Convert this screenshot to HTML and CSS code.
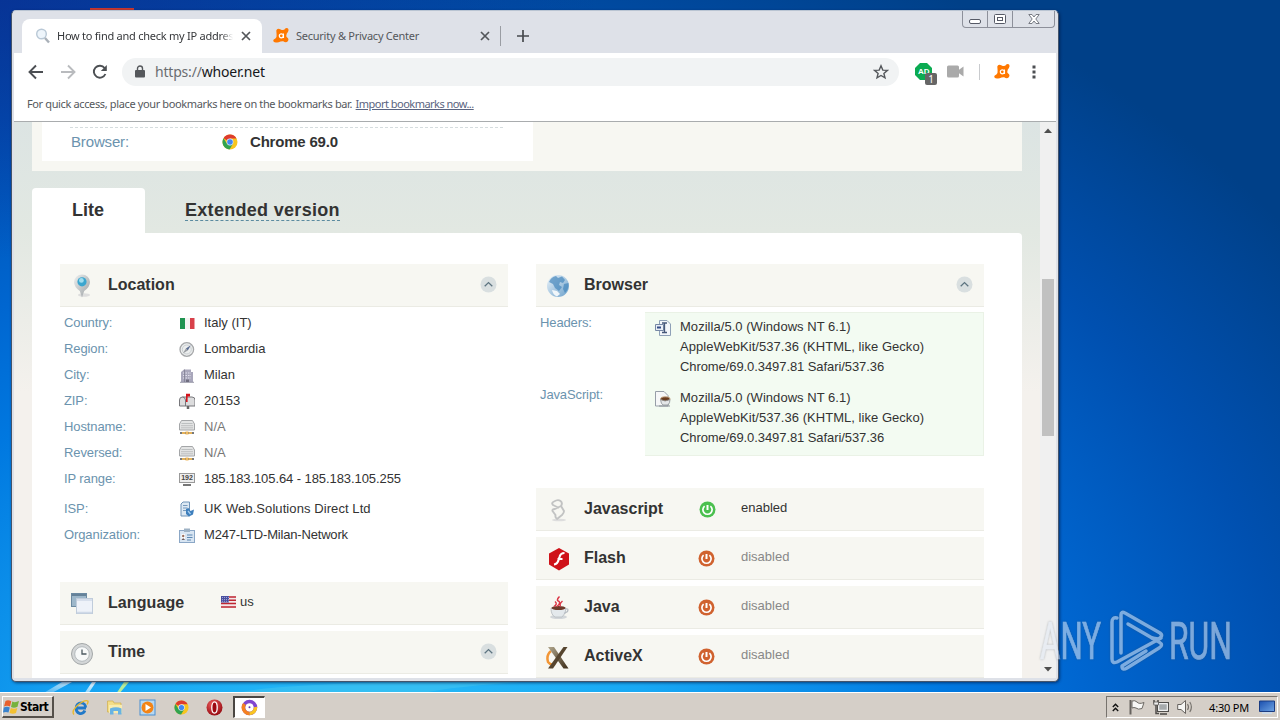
FILE: index.html
```html
<!DOCTYPE html>
<html lang="en">
  <head>
    <meta charset="UTF-8" />
    <meta name="viewport" content="width=device-width, initial-scale=1.0" />
    <title>Whoer</title>
    <link rel="stylesheet" href="styles.css">
  </head>
  <body>
    <!-- shared icons -->
    <svg width="0" height="0" class="defs">
      <defs>
        <linearGradient id="streak" x1="0" y1="1" x2="1" y2="0">
          <stop offset="0" stop-color="#fff" stop-opacity="0.2" />
          <stop offset="1" stop-color="#fff" stop-opacity="0.9" />
        </linearGradient>
        <linearGradient id="pin" x1="0" y1="0" x2="1" y2="1">
          <stop offset="0" stop-color="#eef0f0" />
          <stop offset="1" stop-color="#9a9fa2" />
        </linearGradient>
        <linearGradient id="globe" x1="0" y1="0" x2="1" y2="1">
          <stop offset="0" stop-color="#eef5fa" />
          <stop offset="1" stop-color="#6aa0cb" />
        </linearGradient>
        <linearGradient id="wood" x1="0" y1="0" x2="1" y2="1">
          <stop offset="0" stop-color="#b0a68c" />
          <stop offset="1" stop-color="#3c2c18" />
        </linearGradient>
        <linearGradient id="screen" x1="0" y1="0" x2="1" y2="1">
          <stop offset="0" stop-color="#1a4fae" />
          <stop offset="1" stop-color="#6ea4e4" />
        </linearGradient>
        <radialGradient id="red" cx="0.4" cy="0.3" r="0.8">
          <stop offset="0" stop-color="#f06060" />
          <stop offset="1" stop-color="#8c0008" />
        </radialGradient>
      </defs>
      <symbol id="i-chrome" viewBox="0 0 16 16">
        <circle cx="8" cy="8" r="7.5" fill="#f7c51e" />
        <path d="M8 8 L1.5 4.2 A7.5 7.5 0 0 1 14.5 4.4 L8 4.4 Z" fill="#dd3b2e" />
        <path d="M1.5 4.2 A7.5 7.5 0 0 0 7.5 15.5 L11 9.8 L5 9.8 Z" fill="#31a350" />
        <circle cx="8" cy="8" r="3.4" fill="#e8eefb" />
        <circle cx="8" cy="8" r="2.8" fill="#4287f0" />
      </symbol>
      <symbol id="i-avast" viewBox="0 0 18 18">
        <path d="M4.3 3.6 Q5 1 7.5 2 L9.8 3 Q12 3.4 13.6 1.2 Q16.3 .2 16.6 2.9 Q16.2 5 14.8 6.4 Q14 8.6 14.6 10 Q17.6 12 15.8 14.2 Q14 16.4 11.2 14.2 Q9 14 6.6 15.2 Q1.4 16.4 1.2 13.8 Q1.2 12.4 3.4 11.6 Q5 9.6 4.6 7.4 Z" fill="#ff7800" />
        <circle cx="9.3" cy="8.8" r="2" fill="none" stroke="#fff" stroke-width="1.2" />
        <path d="M11.5 6.5 V11" stroke="#fff" stroke-width="1.1" />
      </symbol>
      <symbol id="i-close" viewBox="0 0 10 10">
        <path d="M1 1 L9 9 M9 1 L1 9" stroke="#53565a" stroke-width="1.7" />
      </symbol>
      <symbol id="i-up" viewBox="0 0 17 17">
        <circle cx="8.5" cy="8.5" r="8" fill="#d9dfe0" />
        <path d="M4.7 10.3 L8.5 6.6 L12.3 10.3" fill="none" stroke="#5d7480" stroke-width="1.3" />
      </symbol>
      <symbol id="i-power" viewBox="0 0 17 17">
        <circle cx="8.5" cy="8.5" r="8" fill="currentColor" />
        <path d="M5.6 5.1 A4.6 4.6 0 1 0 11.4 5.1" fill="none" stroke="#fff" stroke-width="1.7" />
        <path d="M8.5 4 V9" stroke="#fff" stroke-width="2" />
      </symbol>
      <symbol id="i-host" viewBox="0 0 16 16">
        <path d="M2.5 1.5 H13.5 L15.5 5 V11 H.5 V5 Z" fill="#e3e4e4" stroke="#a4a6a8" />
        <path d="M2.5 4.5 H13.5 M2 6.7 H14 M2 8.8 H14" stroke="#b4b6b7" stroke-width=".8" />
        <path d="M1 14 H15" stroke="#77797b" stroke-width="2" />
        <path d="M3 14 H6 M10 14 H13" stroke="#e5b25a" stroke-width="2" />
        <path d="M6.5 12.5 H9.5 V15.5 H6.5 Z" fill="#f1bb60" />
      </symbol>
    </svg>

    <div class="desktop">
      <svg class="streaks" width="1280" height="12" viewBox="0 0 1280 12">
        <path d="M42 12 L62 0 H72 L50 12 Z M84 12 L92 0 H96 L88 12 Z" fill="url(#streak)" />
        <path d="M116 12 L124 0 H129 L119 12 Z" fill="#b9ec9a" />
        <path d="M235 12 Q260 3 400 0 H520 Q440 6 420 12 Z" fill="#7fe0e8" opacity=".2" />
      </svg>
      <div class="shortcut"></div>

      <div class="window">
        <div class="window-buttons">
          <span><svg width="12" height="6"><rect x=".5" y=".5" width="11" height="4" rx="1.5" fill="#fff" stroke="#565a66" /></svg></span>
          <span><svg width="12" height="10"><rect x=".5" y=".5" width="11" height="9" rx="1" fill="#fff" stroke="#565a66" /><rect x="3.5" y="3.5" width="5" height="3" fill="#fff" stroke="#565a66" /></svg></span>
          <span><svg width="12" height="10"><path d="M.8 .5 H4 L6 3 L8 .5 H11.2 L7.8 5 L11.2 9.5 H8 L6 7 L4 9.5 H.8 L4.2 5 Z" fill="#fff" stroke="#6b6e78" stroke-width=".9" /></svg></span>
        </div>

        <div class="tab-strip">
          <div class="tab active">
            <svg width="16" height="16"><circle cx="6.5" cy="6" r="4.8" fill="#eef5fb" stroke="#b9c8d6" stroke-width="1.4" /><path d="M10 10 L14 14.5" stroke="#a9b0b8" stroke-width="2.4" /></svg>
            <span class="tab-title">How to find and check my IP address</span>
            <svg class="tab-close" width="10" height="10"><use href="#i-close" /></svg>
          </div>
          <div class="tab">
            <svg width="18" height="18"><use href="#i-avast" /></svg>
            <span class="tab-title">Security &amp; Privacy Center</span>
            <svg class="tab-close" width="10" height="10"><use href="#i-close" /></svg>
          </div>
          <svg class="new-tab" width="12" height="12"><path d="M6 0 V12 M0 6 H12" stroke="#47494d" stroke-width="1.7" /></svg>
        </div>

        <div class="toolbar">
          <svg class="nav-icon" width="16" height="16"><path d="M15 8 H2 M8 1.5 L1.5 8 L8 14.5" fill="none" stroke="#4c4f53" stroke-width="1.9" /></svg>
          <svg class="nav-icon" width="16" height="16"><path d="M1 8 H14 M8 1.5 L14.5 8 L8 14.5" fill="none" stroke="#b9bbbe" stroke-width="1.9" /></svg>
          <svg class="nav-icon" width="16" height="16"><path d="M13.4 10 A6 6 0 1 1 12.6 4" fill="none" stroke="#4c4f53" stroke-width="1.9" /><path d="M14.8 1 V7 H8.8 Z" fill="#4c4f53" /></svg>
          <div class="omnibox">
            <svg width="10" height="13"><rect x="0" y="5" width="10" height="7.5" rx="1" fill="#55585c" /><path d="M2.5 5.5 V3.5 A2.5 2.5 0 0 1 7.5 3.5 V5.5" fill="none" stroke="#55585c" stroke-width="1.4" /></svg>
            <span class="url"><span>https://</span>whoer.net</span>
            <svg width="16" height="16"><path d="M8 1.8 L9.8 6.1 L14.4 6.4 L10.9 9.4 L12 13.9 L8 11.5 L4 13.9 L5.1 9.4 L1.6 6.4 L6.2 6.1 Z" fill="none" stroke="#55585c" stroke-width="1.4" /></svg>
          </div>
          <div class="extension adblock">
            <svg width="17" height="17"><path d="M5 0 H12 L17 5 V12 L12 17 H5 L0 12 V5 Z" fill="#0bab52" /></svg>
            <b>AD</b>
            <i>1</i>
          </div>
          <svg class="camera" width="17" height="13"><rect x="0" y=".5" width="12" height="12" rx="1.5" fill="#aaa" /><path d="M11 5.5 L16.5 1.5 V11.5 L11 7.5 Z" fill="#aaa" /></svg>
          <div class="divider"></div>
          <svg class="avast" width="18" height="18"><use href="#i-avast" /></svg>
          <svg width="4" height="14"><path d="M.5 .5 h3 v3 h-3z M.5 5.5 h3 v3 h-3z M.5 10.5 h3 v3 h-3z" fill="#4c4f53" /></svg>
        </div>

        <div class="bookmarks">
          <span>For quick access, place your bookmarks here on the bookmarks bar.</span>
          <a>Import bookmarks now...</a>
        </div>

        <div class="view">
          <div class="page">
            <div class="summary">
              <div class="summary-box">
                <span class="label">Browser:</span>
                <svg width="16" height="16"><use href="#i-chrome" /></svg>
                <b>Chrome 69.0</b>
              </div>
            </div>

            <div class="versions">
              <div class="version current">Lite</div>
              <div class="version"><span>Extended version</span></div>
            </div>

            <div class="panel">
              <div class="column">
                <div class="head">
                  <svg width="24" height="24"><ellipse cx="14" cy="21" rx="6" ry="1.8" fill="#ddd" /><path d="M12 23.5 L9.8 17 Q4 13 4 8 A8 7.6 0 0 1 20 8 Q20 13 14.2 17 Z" fill="url(#pin)" /><circle cx="12" cy="7.8" r="4.6" fill="#3aa6cf" /><circle cx="11.4" cy="6.4" r="2.4" fill="#a0dcee" /></svg>
                  <h2>Location</h2>
                  <svg class="up" width="17" height="17"><use href="#i-up" /></svg>
                </div>
                <div class="rows">
                  <div class="row">
                    <span class="label">Country:</span>
                    <svg width="16" height="16"><path d="M1 3 H6 V14 H1 Z" fill="#1f9350" /><path d="M6 3 H11 V14 H6 Z" fill="#f4f4f2" /><path d="M11 3 H15.5 V14 H11 Z" fill="#d8414a" /></svg>
                    <span>Italy (IT)</span>
                  </div>
                  <div class="row">
                    <span class="label">Region:</span>
                    <svg width="16" height="16"><circle cx="7.8" cy="8.5" r="6.8" fill="#eceeee" stroke="#a5a7a9" stroke-width="1.3" /><circle cx="7.8" cy="8.5" r="4.5" fill="none" stroke="#c9ced1" /><path d="M11.8 4.3 L8.8 9.4 L6.9 7.6 Z" fill="#5c6d92" /><path d="M3.8 12.6 L8.8 9.4 L6.9 7.6 Z" fill="#9a9ea3" /></svg>
                    <span>Lombardia</span>
                  </div>
                  <div class="row">
                    <span class="label">City:</span>
                    <svg width="16" height="16"><path d="M2 15 V5 L5 2.5 H12 V5 H14 V15 Z" fill="#a9a7bb" /><path d="M4 6 H12 M4 8.5 H12 M4 11 H12" stroke="#e2e1ee" stroke-dasharray="1.5 1" /><path d="M5.5 2.5 V15 M1 15.3 H15" stroke="#7f7d90" stroke-width=".8" /><path d="M7 12.5 H10 V15 H7 Z" fill="#706e80" /></svg>
                    <span>Milan</span>
                  </div>
                  <div class="row">
                    <span class="label">ZIP:</span>
                    <svg width="17" height="16"><path d="M.5 13 V7 Q.5 4 3.5 4 H13 Q16 4 16 7 V13 Z" fill="#dcdcdd" stroke="#77777b" /><path d="M6.5 13 V7 Q6 4 3.5 4" fill="none" stroke="#77777b" /><path d="M7 9 V.8 H11 V3.6 H8.6 V9 Z" fill="#d3131c" /><path d="M9 13 V16" stroke="#666" stroke-width="2.5" /></svg>
                    <span>20153</span>
                  </div>
                  <div class="row">
                    <span class="label">Hostname:</span>
                    <svg width="16" height="16"><use href="#i-host" /></svg>
                    <span class="muted">N/A</span>
                  </div>
                  <div class="row">
                    <span class="label">Reversed:</span>
                    <svg width="16" height="16"><use href="#i-host" /></svg>
                    <span class="muted">N/A</span>
                  </div>
                  <div class="row">
                    <span class="label">IP range:</span>
                    <span class="ip-icon"><i>192</i></span>
                    <span class="tight">185.183.105.64 - 185.183.105.255</span>
                  </div>
                  <div class="row isp">
                    <span class="label">ISP:</span>
                    <svg width="16" height="16"><path d="M2 15 V3 L4 1 H10.5 V15 Z" fill="#dce8f3" stroke="#6e93b8" /><path d="M4 4.5 H8.5 M4 7 H8.5 M4 9.5 H7" stroke="#7699bc" /><path d="M7 8 L9.5 7 L11.5 10 L15 8.5 L14 13.5 L10 15.5 L7 13 Z" fill="#3e7fbd" /><path d="M9 10 L11.5 13" stroke="#a4cdf0" stroke-width="1.3" /></svg>
                    <span class="provider">UK Web.Solutions Direct Ltd</span>
                  </div>
                  <div class="row">
                    <span class="label">Organization:</span>
                    <svg width="16" height="16"><rect x=".5" y="3.5" width="15" height="12" fill="#d8e5f2" stroke="#8ba7c6" /><path d="M5 1.5 H11 V5 H5 Z" fill="#9eb2c5" /><path d="M2.5 7 H6 V13 H2.5 Z" fill="#fff" /><circle cx="4.2" cy="9" r="1.2" fill="#9a6e5c" /><path d="M2.5 13 Q4.2 9.5 6 13 Z" fill="#6d5e62" /><path d="M8 8 H13.5 M8 10.5 H13.5 M8 13 H12" stroke="#5e89b3" /></svg>
                    <span class="organization">M247-LTD-Milan-Network</span>
                  </div>
                </div>
                <div class="head">
                  <svg width="24" height="24"><rect x="1.5" y="1.5" width="15" height="13" fill="#9db7ca" stroke="#6c8aa2" /><path d="M2 3 H16" stroke="#557189" stroke-width="1.5" /><rect x="6.5" y="6.5" width="16" height="15" fill="#eef2f9" stroke="#c0ccdb" /><path d="M7 8 H22 M7 20.5 H22" stroke="#cfd9e8" stroke-width="1.5" /></svg>
                  <h2 class="language">Language</h2>
                  <svg width="15" height="12"><path d="M0 0 H15 V12 H0 Z" fill="#f3e8ea" /><path d="M0 1 H15 M0 4.3 H15 M0 7.6 H15 M0 11 H15" stroke="#be2632" stroke-width="1.5" /><path d="M0 0 H8 V6.5 H0 Z" fill="#4a4fa0" /><path d="M1 1.5 H8 M1 3.5 H8 M1 5.3 H8" stroke="#c5c7e6" stroke-width=".7" stroke-dasharray="1 1" /></svg>
                  <span class="us">us</span>
                </div>
                <div class="head">
                  <svg width="24" height="24"><circle cx="12" cy="13" r="10.5" fill="#d3d6d7" stroke="#a3a7a8" /><circle cx="12" cy="13" r="7.3" fill="#f7f9f9" stroke="#b4babd" /><path d="M12 8.5 V13 H16.5" fill="none" stroke="#4d5a62" stroke-width="1.3" /></svg>
                  <h2>Time</h2>
                  <svg class="up" width="17" height="17"><use href="#i-up" /></svg>
                </div>
              </div>

              <div class="column">
                <div class="head">
                  <svg width="24" height="24"><circle cx="12" cy="12" r="11" fill="url(#globe)" /><path d="M3 8 Q5 3 10 2 L12 4 L16 2.5 L19 6 L17 9 L14 8 L13 11 L16 13 L13 17 L9 14 L7 10 Z M18 10 L22.5 9 Q23 15 19 19 L17 15 Z" fill="#4688bc" opacity=".7" /><path d="M6 16 L11 17 L14 20 L11 22.5 Q7 21 6 16 Z" fill="#fff" opacity=".85" /></svg>
                  <h2>Browser</h2>
                  <svg class="up" width="17" height="17"><use href="#i-up" /></svg>
                </div>
                <div class="agents">
                  <div class="agent-labels">
                    <span class="label">Headers:</span>
                    <span class="label">JavaScript:</span>
                  </div>
                  <div class="agent-box">
                    <div class="agent">
                      <svg width="16" height="16"><path d="M4.5 .5 H12 L15.5 4 V15.5 H4.5 Z" fill="#f3f6fa" stroke="#8ea0b7" /><path d="M.5 4.5 H8.5 V10.5 H.5 Z" fill="#e9eef6" stroke="#7688a5" /><path d="M2 7.5 H6" stroke="#354d86" stroke-width="2" /><path d="M7 3 H12 M9.5 3 V12.5 M7 12.5 H12" stroke="#46587a" stroke-width="1.3" /></svg>
                      <p>Mozilla/5.0 (Windows NT 6.1)<br />AppleWebKit/537.36 (KHTML, like Gecko)<br /><span>Chrome/69.0.3497.81 Safari/537.36</span></p>
                    </div>
                    <div class="agent">
                      <svg width="16" height="16"><path d="M.5 .5 H9 L13 4.5 V15 H.5 Z" fill="#f6f7f8" stroke="#979ea8" /><ellipse cx="10.3" cy="8" rx="4.7" ry="2.2" fill="#6a3d20" stroke="#c7a785" /><path d="M5.5 8.5 Q6 13 8 14 H13 Q15 12 15 8.5 Q10 11.5 5.5 8.5 Z" fill="#e4e6e8" stroke="#888d92" stroke-width=".8" /><path d="M4 15 H15" stroke="#8d9299" /></svg>
                      <p>Mozilla/5.0 (Windows NT 6.1)<br />AppleWebKit/537.36 (KHTML, like Gecko)<br /><span>Chrome/69.0.3497.81 Safari/537.36</span></p>
                    </div>
                  </div>
                </div>

                <div class="head plugin">
                  <svg width="24" height="24"><ellipse cx="13" cy="22" rx="7" ry="1.3" fill="#ddd" /><path d="M13 10 L7 7 Q5 5 8 3.5 Q12 1 14.5 3 Q17 5 15 8 L18 13 Q18 15 16 17 L11 21 Q9 20 9.5 17 L6.5 13 Q6 11 9 11 L15 8" fill="none" stroke="#c2c3c3" stroke-width="1.9" stroke-linejoin="round" /></svg>
                  <h2>Javascript</h2>
                  <svg class="on" width="17" height="17"><use href="#i-power" /></svg>
                  <span>enabled</span>
                </div>
                <div class="head plugin off">
                  <svg width="24" height="24"><path d="M13 1 L23 6.5 V17.5 L13 23.5 L3 17.5 V6.5 Z" fill="#cf1219" /><path d="M18.5 6 Q14.5 6 13.5 10 L12.5 13 Q11.5 17 8 17.5 M11.5 12 H16.5" fill="none" stroke="#fff" stroke-width="2.2" /></svg>
                  <h2>Flash</h2>
                  <svg width="17" height="17"><use href="#i-power" /></svg>
                  <span>disabled</span>
                </div>
                <div class="head plugin off">
                  <svg width="24" height="24"><ellipse cx="12.5" cy="21" rx="8.5" ry="2" fill="#d2d6d9" /><path d="M5 12 Q5 19 9 21 H16 Q20 18 20 12 Z" fill="#e4e9ec" stroke="#b4babf" stroke-width=".8" /><path d="M19.5 13 Q23 12 21.5 15.5 L18 17.5" fill="none" stroke="#b6bcc2" stroke-width="1.3" /><ellipse cx="12.5" cy="12" rx="7" ry="2" fill="#6d3b2b" /><path d="M8 10.5 Q12 8 9 5.5 M11 10.5 Q16 6 11.5 4.5 Q11 3 13.5 .5 M14.5 10.5 Q13 8 16.5 5" fill="none" stroke="#da3444" stroke-width="1.4" /></svg>
                  <h2>Java</h2>
                  <svg width="17" height="17"><use href="#i-power" /></svg>
                  <span>disabled</span>
                </div>
                <div class="head plugin off">
                  <svg width="24" height="24"><path d="M5 6 Q0 10 2 17 Q5 21 9 19" fill="none" stroke="#f29636" stroke-width="2.5" /><path d="M2 2 H8 L22.5 23.5 H17.5 Z" fill="url(#wood)" /><path d="M21.5 2 H17.5 L2 23.5 H7 Z" fill="#56452f" /></svg>
                  <h2>ActiveX</h2>
                  <svg width="17" height="17"><use href="#i-power" /></svg>
                  <span>disabled</span>
                </div>
              </div>
            </div>
          </div>

          <div class="scrollbar">
            <svg width="8" height="5"><path d="M0 5 H8 L4 .5 Z" fill="#4e4e4e" /></svg>
            <div class="thumb"></div>
            <svg class="down" width="8" height="5"><path d="M0 0 H8 L4 4.5 Z" fill="#4e4e4e" /></svg>
          </div>
        </div>
      </div>

      <svg class="watermark" width="206" height="72" viewBox="0 0 206 72">
        <g fill="#e2eaf5" stroke="#e2eaf5" stroke-width=".7" font-family="Roboto, sans-serif" font-size="51">
          <text x="2" y="50" textLength="61" lengthAdjust="spacingAndGlyphs">ANY</text>
          <text x="131" y="50" textLength="63" lengthAdjust="spacingAndGlyphs">RUN</text>
        </g>
        <g fill="none" stroke="#e2eaf5" stroke-width="3.5" stroke-linejoin="round" stroke-linecap="round">
          <path d="M79 9 Q74 8 74 13 V50 Q74 55 79 53 L123 29" />
          <path d="M83 44 V6 Q83 2 87 4 L122 24 Q126 27 120 30 L114 29" />
          <path d="M90 15 L121 33 Q126 36 121 39 L89 59 Q84 62 84 57 L108 42" />
        </g>
      </svg>

      <div class="taskbar">
        <div class="start">
          <svg width="16" height="16"><path d="M2.5 2 Q5 .5 8.3 2.2 L7 7.5 Q4 6 1 7.5 Z" fill="#e8602c" /><path d="M9.3 2.5 Q12 4 16 2 L14.5 7.8 Q11 9.5 8 8 Z" fill="#77b23c" /><path d="M.8 8.5 Q4 7 6.8 8.5 L5.5 13.5 Q3 12.5 0 13.5 Z" fill="#3a83cd" /><path d="M7.8 9 Q11 10.5 14.3 9 L13 14 Q10 15.5 6.5 14 Z" fill="#f3c031" /></svg>
          <b>Start</b>
        </div>
        <svg class="launch" width="17" height="17"><path d="M14 9 H4.5 A4.2 4.2 0 0 0 12.8 11.5 M4.3 8.5 A4.6 4.6 0 0 1 13.6 8.5" fill="none" stroke="#2179c8" stroke-width="2.9" /><path d="M2 15.5 Q-1 12 6 6 Q13 .5 15.8 2 Q16.5 3 15 5.5" fill="none" stroke="#e7b92f" stroke-width="1.4" /></svg>
        <svg class="launch" width="17" height="17"><path d="M1.5 2 H7 L8 4 H15 V13 H1.5 Z" fill="#f3dd87" stroke="#d0ae4c" stroke-width=".7" /><path d="M3 6 H16 V14 H3 Z" fill="#f9ecae" /><path d="M4 15.5 V9.5 Q10 7 15.5 9.5 V15.5 H12 V12 H7.5 V15.5 Z" fill="#68b3e2" /></svg>
        <svg class="launch" width="17" height="17"><rect x="1" y="1" width="15" height="15" fill="#b8d8f0" stroke="#4b8fd1" /><circle cx="8.5" cy="8.5" r="6" fill="#f38416" /><path d="M6.5 5 L12 8.5 L6.5 12 Z" fill="#fff" /></svg>
        <svg class="launch chrome" width="15" height="15"><use href="#i-chrome" /></svg>
        <svg class="launch" width="17" height="17"><ellipse cx="8.5" cy="8.5" rx="8" ry="8" fill="url(#red)" /><ellipse cx="8.5" cy="8.5" rx="2.7" ry="5.6" fill="#9e0810" stroke="#fff" stroke-width="1.3" /></svg>
        <div class="task">
          <svg width="17" height="17"><circle cx="8.5" cy="8.5" r="6" fill="none" stroke="#8147ce" stroke-width="3.5" /><path d="M8.5 14.5 A6 6 0 0 1 3.5 5" fill="none" stroke="#f58221" stroke-width="3.5" /><path d="M8.5 14.5 A6 6 0 0 0 14.5 8" fill="none" stroke="#f9c421" stroke-width="3.5" /><path d="M5.5 5.5 H11.5 V9 L8.5 12 L5.5 9 Z" fill="#fff" /><circle cx="8.5" cy="8.3" r="1" fill="#5d3ab2" /></svg>
        </div>
        <div class="tray">
          <svg width="7" height="9"><path d="M.8 4 L3.5 1.3 L6.2 4 M.8 8 L3.5 5.3 L6.2 8" fill="none" stroke="#111" stroke-width="1.4" /></svg>
          <svg width="16" height="16"><path d="M1.5 1 V15.5" stroke="#66625e" stroke-width="2" /><path d="M3 2 Q6 1 8 3 Q10 5.5 15 3.5 L13 9.5 Q9 11 7 9 Q5 8 3 9 Z" fill="#f8f8f6" stroke="#6c6964" /></svg>
          <svg width="16" height="16"><rect x="4.5" y="3.5" width="11" height="9" fill="#a6aaac" stroke="#504e4b" /><rect x="5.7" y="4.7" width="8.6" height="6.6" fill="none" stroke="#fff" /><path d="M7 15 H14" stroke="#504e4b" stroke-width="1.6" /><path d="M1 1 V4 H5 V1 M3 4 V14.5 H6" fill="none" stroke="#504e4b" stroke-width="1.5" /><path d="M.8 3 H5.5 V6 H.8 Z" fill="#eee" stroke="#504e4b" stroke-width=".7" /></svg>
          <svg width="17" height="16"><path d="M.7 5.5 H4 L8.5 1.5 V14.5 L4 10.5 H.7 Z" fill="#f6f6f4" stroke="#66625e" /><path d="M10.5 5 Q12.5 8 10.5 11 M12.8 3 Q16 8 12.8 13" fill="none" stroke="#77736e" stroke-width="1.2" /></svg>
          <span class="clock">4:30 PM</span>
          <svg width="16" height="14"><path d="M.5 1 H15.5 V11.5 H.5 Z" fill="url(#screen)" stroke="#1b3c82" /><path d="M3 13 H13" stroke="#c9dcf0" stroke-width="1.5" /></svg>
        </div>
      </div>
    </div>
  </body>
</html>
```
FILE: styles.css
```css
html,
body {
  margin: 0;
  padding: 0;
  font-family: "Liberation Sans", Arial, sans-serif;
}
.defs {
  position: absolute;
}
svg {
  flex: none;
  display: block;
}
.desktop {
  position: relative;
  width: 1280px;
  height: 720px;
  overflow: hidden;
  background: radial-gradient(ellipse 600px 260px at 0 0, rgba(12, 40, 150, 0.6), transparent),
    radial-gradient(
      ellipse 1150px 900px at 380px 780px,
      #2cc0f6 0%,
      #18a8f4 25%,
      #0078e0 50%,
      #0066d0 62%,
      #0050b0 80%,
      #004088 100%
    );
}
.streaks {
  position: absolute;
  left: 0;
  top: 682px;
}
.shortcut {
  position: absolute;
  left: 90px;
  top: 8px;
  width: 44px;
  height: 3px;
  background: #c8382e;
}

/* browser window */
.window {
  position: absolute;
  left: 11px;
  top: 10px;
  width: 1048px;
  height: 672px;
  box-sizing: border-box;
  border: 1px solid #45546a;
  border-top-color: #b9c4d2;
  border-radius: 5px;
  background: #dee1e8;
  padding: 0 2px 3px;
  display: flex;
  flex-direction: column;
  box-shadow: 1px 1px 3px rgba(0, 20, 60, 0.6);
}
.window-buttons {
  position: absolute;
  right: 3px;
  top: 0;
  height: 16px;
  display: flex;
  border: 1px solid #8d909a;
  border-top: none;
  border-radius: 0 0 4px 4px;
}
.window-buttons span {
  width: 24px;
  display: flex;
  align-items: center;
  justify-content: center;
  border-right: 1px solid #8d909a;
}
.window-buttons span:first-child {
  align-items: flex-end;
  padding-bottom: 2px;
  height: 14px;
}
.window-buttons span:last-child {
  width: 41px;
  border-right: none;
}
.tab-strip {
  height: 34px;
  padding: 8px 0 0 8px;
  display: flex;
  align-items: stretch;
}
.tab {
  width: 240px;
  box-sizing: border-box;
  padding: 0 12px 0 10px;
  display: flex;
  align-items: center;
  font: 11px "Noto Sans", sans-serif;
  color: #54575b;
}
.tab.active {
  background: #fff;
  border-radius: 8px 8px 0 0;
  padding: 0 11px 0 13px;
  color: #36383b;
}
.tab-title {
  margin: -1px 0 0 6px;
  width: 176px;
  white-space: nowrap;
  overflow: hidden;
  letter-spacing: -0.25px;
}
.tab.active .tab-title {
  -webkit-mask-image: linear-gradient(90deg, #000 93%, transparent);
}
.tab-close {
  margin-left: auto;
}
.new-tab {
  align-self: center;
  margin-left: 15px;
}
.tab:nth-child(2) {
  position: relative;
}
.tab:nth-child(2)::after {
  content: "";
  position: absolute;
  right: 1px;
  top: 7px;
  width: 1px;
  height: 20px;
  background: #9a9da3;
}
.toolbar {
  height: 37px;
  background: #fff;
  display: flex;
  align-items: center;
  padding: 0 20px 0 14px;
}
.nav-icon {
  margin-right: 16px;
}
.omnibox {
  width: 777px;
  height: 28px;
  margin-left: -2px;
  box-sizing: border-box;
  border-radius: 14px;
  background: #f1f3f4;
  padding: 0 10px 0 13px;
  display: flex;
  align-items: center;
}
.url {
  margin: 0 auto 0 10px;
  font: 14px "Noto Sans", sans-serif;
  color: #15171a;
  letter-spacing: -0.2px;
}
.url span {
  color: #6a6d71;
}
.extension {
  position: relative;
  margin-left: 16px;
}
.adblock b {
  position: absolute;
  left: 3px;
  top: 4px;
  font-size: 8px;
  line-height: 9px;
  color: #fff;
}
.adblock i {
  position: absolute;
  left: 10px;
  top: 10px;
  width: 12px;
  height: 12px;
  border-radius: 2px;
  background: #666;
  color: #fff;
  font: 10px/12px "Noto Sans", sans-serif;
  text-align: center;
}
.camera {
  margin-left: 15px;
}
.divider {
  width: 1px;
  height: 16px;
  margin: 0 13px 0 15px;
  background: #c9cbce;
}
.avast {
  margin-right: auto;
}
.bookmarks {
  height: 31px;
  padding: 0 13px;
  background: #fff;
  border-bottom: 1px solid #a9acae;
  font: 11px/28px "Noto Sans", sans-serif;
  color: #55585c;
  white-space: nowrap;
  letter-spacing: -0.37px;
}
.bookmarks a {
  margin-left: 1px;
  letter-spacing: -0.52px;
  color: #5a6480;
  text-decoration: underline;
}
.view {
  flex: 1;
  min-height: 0;
  display: flex;
  overflow: hidden;
}

/* page */
.page {
  width: 1026px;
  box-sizing: border-box;
  padding: 0 18px;
  background: linear-gradient(#dce4e3 0, #e2e8e2 110px, #f4f1ed 270px);
  overflow: hidden;
  font-size: 13px;
  color: #333;
}
.label {
  color: #6b93ae;
}
.summary {
  height: 49px;
  padding-left: 10px;
  background: #f7f7f2;
}
.summary-box {
  position: relative;
  width: 491px;
  height: 39px;
  box-sizing: border-box;
  padding: 0 0 0 29px;
  background: #fff;
  display: flex;
  align-items: center;
  font-size: 15px;
}
.summary-box::before {
  content: "";
  position: absolute;
  left: 28px;
  right: 30px;
  top: 5px;
  border-top: 1px dashed #d5dcde;
}
.summary-box .label {
  width: 151px;
  letter-spacing: -0.15px;
}
.summary-box b {
  margin-left: 12px;
  letter-spacing: -0.2px;
}
.versions {
  margin-top: 17px;
  height: 45px;
  display: flex;
  font-size: 18px;
  font-weight: bold;
  line-height: 44px;
}
.version {
  padding: 0 40px;
}
.version.current {
  width: 113px;
  box-sizing: border-box;
  background: #fff;
  border-radius: 4px 4px 0 0;
}
.version span {
  letter-spacing: 0.3px;
  border-bottom: 1px dashed #5b8ba0;
}
.panel {
  height: 480px;
  padding: 31px 28px 0;
  background: #fff;
  border-radius: 0 4px 0 0;
  display: flex;
  gap: 28px;
}
.column {
  width: 448px;
}
.head {
  height: 43px;
  box-sizing: border-box;
  margin-bottom: 5px;
  padding: 0 11px 0 10px;
  background: #f7f7f2;
  border-bottom: 1px solid #ebebe4;
  display: flex;
  align-items: center;
}
.head + .head {
  margin-top: 6px;
}
.head > svg:first-child {
  margin-top: 1px;
}
h2 {
  margin: -1px 0 0 14px;
  font-size: 16px;
}
.up {
  margin: -2px 0 0 auto;
}
h2.language {
  width: 113px;
  letter-spacing: 0.1px;
}
.head > .language + svg {
  margin-top: -2px;
}
.us {
  margin: -4px 0 0 4px;
}
.rows {
  padding: 0 4px;
  margin: -3px 0 35px;
}
.row {
  height: 26px;
  display: flex;
  align-items: center;
}
.row .label {
  width: 115px;
  letter-spacing: -0.1px;
}
.row svg {
  margin-top: 2px;
}
.row > :nth-child(2) {
  width: 16px;
  margin-right: 9px;
}
.row.isp {
  margin-top: 4px;
}
.muted {
  color: #777;
}
.tight {
  letter-spacing: -0.08px;
}
.provider {
  letter-spacing: 0.08px;
}
.organization {
  letter-spacing: -0.18px;
}
.ip-icon {
  position: relative;
  height: 10px;
  box-sizing: border-box;
  border: 1px solid #999;
  background: #eee;
  text-align: center;
}
.ip-icon i {
  display: block;
  font: bold 7px/8px "Liberation Sans", sans-serif;
  color: #444;
}
.ip-icon::after {
  content: "";
  position: absolute;
  left: 3px;
  top: 10px;
  width: 8px;
  height: 2px;
  background: #777;
}
.agents {
  display: flex;
  margin-bottom: 32px;
}
.agent-labels {
  width: 105px;
  padding: 3px 0 0 4px;
  display: flex;
  flex-direction: column;
  gap: 57px;
  letter-spacing: -0.12px;
}
.agent-box {
  flex: 1;
  height: 144px;
  box-sizing: border-box;
  padding: 4px 10px;
  background: #f3fbf2;
  border: 1px solid #eaf2e6;
  border-left: none;
}
.agent {
  display: flex;
  gap: 9px;
  height: 71px;
}
.agent svg {
  margin-top: 3px;
}
.agent p {
  margin: 0;
  line-height: 20px;
  letter-spacing: 0.04px;
}
.agent p span {
  letter-spacing: -0.08px;
}
.plugin h2 {
  width: 114px;
}
.plugin > svg:nth-child(3) {
  color: #d0622f;
  margin: 1px 26px 0 0;
}
.plugin > svg.on:nth-child(3) {
  margin: 1px 25px 0 1px;
  color: #4bc04f;
}
.plugin.off span {
  color: #888;
}
.plugin span {
  margin-top: -4px;
}

.scrollbar {
  width: 16px;
  background: #f0f0f0;
  display: flex;
  flex-direction: column;
  align-items: center;
  padding: 6px 0 6px;
  box-sizing: border-box;
}
.thumb {
  width: 12px;
  height: 157px;
  margin-top: 146px;
  background: #c1c1c1;
}
.down {
  margin-top: auto;
}

.watermark {
  position: absolute;
  left: 1038px;
  top: 609px;
  opacity: 0.55;
  filter: drop-shadow(0 0 1px rgba(60, 70, 80, 0.6));
}

/* taskbar */
.taskbar {
  position: absolute;
  left: 0;
  bottom: 0;
  width: 1280px;
  height: 28px;
  box-sizing: border-box;
  padding: 3px 2px 2px;
  border-top: 1px solid #fff;
  background: #d5cfc8;
  display: flex;
  align-items: center;
}
.start {
  width: 52px;
  height: 22px;
  box-sizing: border-box;
  border: 1px solid #fff;
  border-right: 2px solid #55504a;
  border-bottom: 2px solid #55504a;
  display: flex;
  align-items: center;
  margin-right: 18px;
}
.start b {
  margin-left: 1px;
  font: bold 12px "DejaVu Sans Condensed", "DejaVu Sans", sans-serif;
  letter-spacing: -0.5px;
}
.launch {
  margin-right: 16.5px;
}
.launch.chrome {
  margin: 0 17.5px 0 1px;
}
.task {
  width: 32px;
  height: 22px;
  box-sizing: border-box;
  margin-left: -7px;
  background: #fff;
  border: 1px solid #fff;
  border-left: 2px solid #4a4642;
  border-top: 2px solid #4a4642;
  display: flex;
  align-items: center;
  justify-content: center;
}
.tray {
  width: 172px;
  height: 22px;
  box-sizing: border-box;
  margin-left: auto;
  padding: 0 2px 0 5px;
  border: 1px solid #fff;
  border-left-color: #77736e;
  border-top-color: #77736e;
  display: flex;
  align-items: center;
  gap: 8px;
}
.tray svg:first-child {
  margin-right: 2px;
}
.clock {
  margin-left: auto;
  margin-right: 2px;
  font: 11px "Noto Sans", sans-serif;
  letter-spacing: -0.2px;
  white-space: nowrap;
}
```
